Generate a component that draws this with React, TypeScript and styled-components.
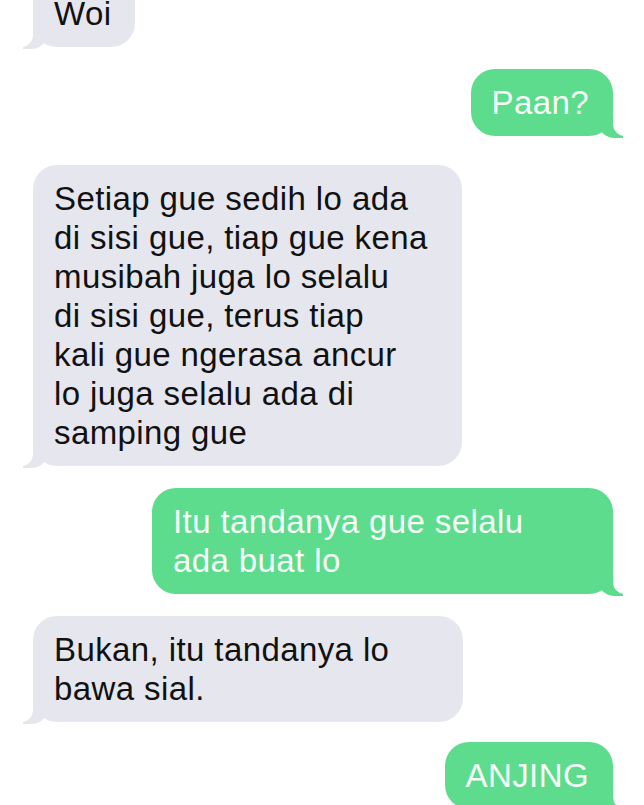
import styled, { createGlobalStyle, css } from "styled-components";

const GlobalStyle = createGlobalStyle`
  html, body {
    margin: 0;
    padding: 0;
    background: #ffffff;
    overflow: hidden;
  }
`;

const GREY = "#e6e6ee";
const GREEN = "#5cdc8c";

const Thread = styled.div`
  display: flex;
  flex-direction: column;
  gap: 22px;
  padding: 0 31px 40px 33px;
  font-family: "Liberation Sans", Arial, sans-serif;
`;

const themTail = css`
  &::before {
    content: "";
    position: absolute;
    left: -10px;
    bottom: -2px;
    width: 24px;
    height: 24px;
    background: ${GREY};
    border-bottom-right-radius: 16px 14px;
  }
  &::after {
    content: "";
    position: absolute;
    left: -30px;
    bottom: 0;
    width: 30px;
    height: 26px;
    background: #ffffff;
    border-bottom-right-radius: 12px;
  }
`;

const meTail = css`
  &::before {
    content: "";
    position: absolute;
    right: -10px;
    bottom: -2px;
    width: 24px;
    height: 24px;
    background: ${GREEN};
    border-bottom-left-radius: 16px 14px;
  }
  &::after {
    content: "";
    position: absolute;
    right: -30px;
    bottom: 0;
    width: 30px;
    height: 26px;
    background: #ffffff;
    border-bottom-left-radius: 12px;
  }
`;

const Bubble = styled.div<{ $me?: boolean; $width?: number; $mt?: number }>`
  position: relative;
  box-sizing: border-box;
  align-self: ${(p) => (p.$me ? "flex-end" : "flex-start")};
  width: ${(p) => (p.$width ? `${p.$width}px` : "auto")};
  margin-top: ${(p) => p.$mt ?? 0}px;
  padding: 14px 24px 14px 21px;
  border-radius: 24px;
  background: ${(p) => (p.$me ? GREEN : GREY)};
  color: ${(p) => (p.$me ? "#f6fff8" : "#111111")};
  font-size: 33px;
  letter-spacing: 0.4px;
  line-height: 39px;
  white-space: nowrap;
  ${(p) => (p.$me ? meTail : themTail)}
`;

const Line = styled.span`
  position: relative;
  z-index: 1;
  display: block;
`;

type Msg = { me?: boolean; width?: number; mt?: number; lines: string[] };

const messages: Msg[] = [
  { lines: ["Woi"], mt: -20 },
  { me: true, lines: ["Paan?"] },
  {
    width: 429,
    mt: 7,
    lines: [
      "Setiap gue sedih lo ada",
      "di sisi gue, tiap gue kena",
      "musibah juga lo selalu",
      "di sisi gue, terus tiap",
      "kali gue ngerasa ancur",
      "lo juga selalu ada di",
      "samping gue",
    ],
  },
  { me: true, width: 461, lines: ["Itu tandanya gue selalu", "ada buat lo"] },
  { width: 430, lines: ["Bukan, itu tandanya lo", "bawa sial."] },
  { me: true, mt: -2, lines: ["ANJING"] },
];

export default function App() {
  return (
    <>
      <GlobalStyle />
      <Thread>
        {messages.map((m, i) => (
          <Bubble key={i} $me={m.me} $width={m.width} $mt={m.mt}>
            {m.lines.map((l, j) => (
              <Line key={j}>{l}</Line>
            ))}
          </Bubble>
        ))}
      </Thread>
    </>
  );
}
